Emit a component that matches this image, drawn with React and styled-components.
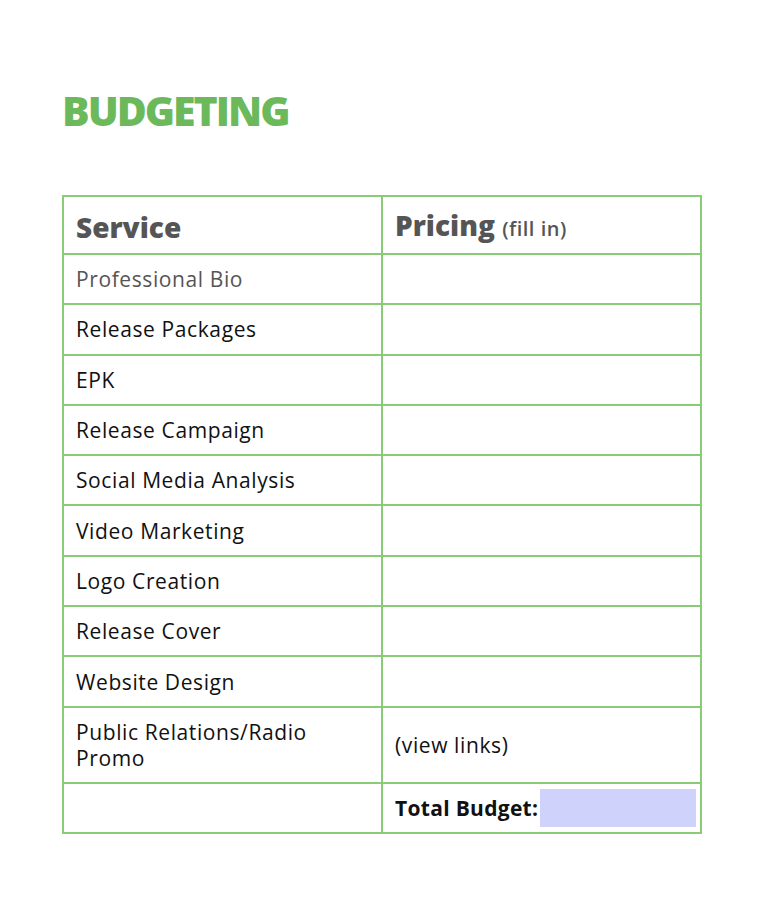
import React from "react"
import styled, { createGlobalStyle } from "styled-components"

const GlobalStyle = createGlobalStyle`
  body {
    margin: 0;
    background: #ffffff;
    font-family: "Open Sans", Lato, sans-serif;
  }
`

const Page = styled.div`
  padding: 84px 66px 0 62px;
`

const Title = styled.h1`
  margin: 0 0 59px;
  color: #6cb95c;
  font-size: 41px;
  font-weight: 800;
  line-height: 52px;
  letter-spacing: -2px;
`

const Table = styled.table`
  width: 640px;
  border-collapse: collapse;
  table-layout: fixed;
`

const Cell = styled.td`
  border: 2px solid #8acb78;
  padding: 0 12px;
  height: ${(p) => p.h || 48.3}px;
  color: ${(p) => (p.muted ? "#555555" : "#111111")};
  font-size: 21px;
  line-height: 26px;
  letter-spacing: 0.6px;
  vertical-align: middle;
`

const HeadCell = styled(Cell)`
  height: 52px;
  padding-top: 4px;
  color: #555555;
  font-size: 28px;
  font-weight: 800;
  letter-spacing: 0;
`

const Small = styled.span`
  font-size: 20px;
  font-weight: 600;
  letter-spacing: 0.5px;
`

const Total = styled.div`
  display: flex;
  align-items: center;
  font-weight: 700;
  letter-spacing: 0.3px;
  margin-right: -8px;
`

const Highlight = styled.span`
  flex: 1;
  height: 38px;
  margin-left: 2px;
  background: #cfd2fb;
`

const services = [
  "Release Packages",
  "EPK",
  "Release Campaign",
  "Social Media Analysis",
  "Video Marketing",
  "Logo Creation",
  "Release Cover",
  "Website Design",
]

export default function App() {
  return (
    <Page>
      <GlobalStyle />
      <Title>BUDGETING</Title>
      <Table>
        <tbody>
          <tr>
            <HeadCell>Service</HeadCell>
            <HeadCell>
              Pricing <Small>(fill in)</Small>
            </HeadCell>
          </tr>
          <tr>
            <Cell muted>Professional Bio</Cell>
            <Cell />
          </tr>
          {services.map((s) => (
            <tr key={s}>
              <Cell>{s}</Cell>
              <Cell />
            </tr>
          ))}
          <tr>
            <Cell h={74}>
              Public Relations/Radio
              <br />
              Promo
            </Cell>
            <Cell h={74}>(view links)</Cell>
          </tr>
          <tr>
            <Cell />
            <Cell>
              <Total>
                Total Budget:<Highlight />
              </Total>
            </Cell>
          </tr>
        </tbody>
      </Table>
    </Page>
  )
}
